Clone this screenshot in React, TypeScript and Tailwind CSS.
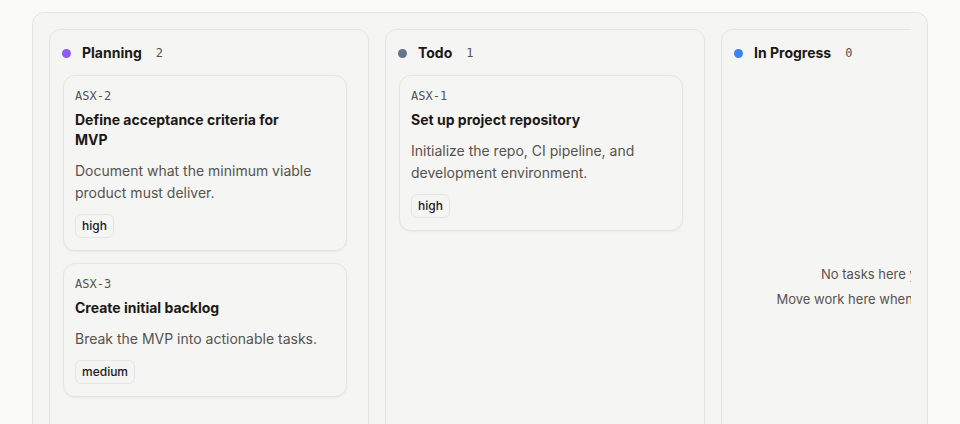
const COLUMNS: {
  title: string;
  dot: string;
  tasks: { id: string; title: string; body: string; priority: string }[];
}[] = [
  {
    title: "Planning",
    dot: "bg-[#8b5cf6]",
    tasks: [
      {
        id: "ASX-2",
        title: "Define acceptance criteria for MVP",
        body: "Document what the minimum viable product must deliver.",
        priority: "high",
      },
      {
        id: "ASX-3",
        title: "Create initial backlog",
        body: "Break the MVP into actionable tasks.",
        priority: "medium",
      },
    ],
  },
  {
    title: "Todo",
    dot: "bg-[#64748b]",
    tasks: [
      {
        id: "ASX-1",
        title: "Set up project repository",
        body: "Initialize the repo, CI pipeline, and development environment.",
        priority: "high",
      },
    ],
  },
  { title: "In Progress", dot: "bg-[#3b82f6]", tasks: [] },
];

const SANS = "font-['Inter','Noto_Sans',sans-serif]";
const MONO = "font-['DejaVu_Sans_Mono','Liberation_Mono',monospace]";

function TaskCard({ task }: { task: (typeof COLUMNS)[number]["tasks"][number] }) {
  return (
    <div className="rounded-xl border border-[#e7e5e4] bg-[#f5f5f4] py-3 pl-[11px] pr-3 shadow-[0_1px_2px_rgba(0,0,0,0.05)]">
      <div className={`${MONO} text-xs leading-4 text-[#57534e]`}>{task.id}</div>
      <div className="mt-1.5 pr-10 text-sm font-bold leading-5 text-[#1c1917]">{task.title}</div>
      <p className="mt-2.5 text-sm leading-[22px] text-[#57534e]">{task.body}</p>
      <div className="mt-2.5 flex">
        <span className="rounded-md border border-[#e7e5e4] bg-[#f5f5f4] px-1.5 py-[3px] text-xs font-medium leading-4 text-[#1c1917]">
          {task.priority}
        </span>
      </div>
    </div>
  );
}

export default function App() {
  return (
    <div className={`${SANS} h-[424px] overflow-hidden bg-[#fafaf9] px-8 pt-3`}>
      <div className="h-[440px] rounded-xl border border-[#e7e5e4] bg-[#f5f5f4] p-4">
        <div className="flex h-full gap-4 overflow-hidden">
          {COLUMNS.map((col) => (
            <div
              key={col.title}
              className="flex h-[420px] w-[320px] shrink-0 flex-col rounded-xl border border-[#e7e5e4] bg-[#f5f5f4] pl-[12px] pr-[21px] pt-[13px]"
            >
              <div className="mb-3 flex h-5 items-center">
                <span className={`size-[9px] rounded-full ${col.dot}`} />
                <span className="ml-[11px] text-sm font-bold leading-5 text-[#1c1917]">{col.title}</span>
                <span className={`${MONO} ml-[14px] text-xs leading-4 text-[#57534e]`}>
                  {col.tasks.length}
                </span>
              </div>
              {col.tasks.length > 0 ? (
                <div className="ml-px flex flex-col gap-3">
                  {col.tasks.map((t) => (
                    <TaskCard key={t.id} task={t} />
                  ))}
                </div>
              ) : (
                <div className="flex flex-col items-center pt-[189px] text-center text-[13px] leading-5 text-[#57534e]">
                  <p className="whitespace-nowrap">No tasks here yet.</p>
                  <p className="mt-[5px] whitespace-nowrap">Move work here when it's ready.</p>
                </div>
              )}
            </div>
          ))}
        </div>
      </div>
    </div>
  );
}
